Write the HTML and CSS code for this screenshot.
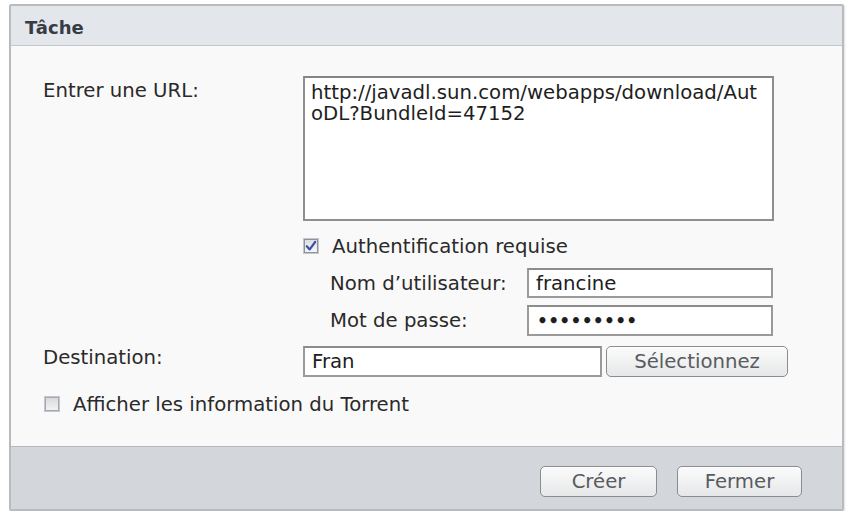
FILE: index.html
```html
<!DOCTYPE html>
<html lang="fr">
<head>
<meta charset="utf-8">
<title>Tâche</title>
<link rel="stylesheet" href="styles.css">
</head>
<body>
<div class="dialog">
  <div class="titlebar">Tâche</div>
  <div class="content">
    <div class="row-url">
      <span class="lbl lbl-url">Entrer une URL:</span>
      <textarea class="url" spellcheck="false">http://javadl.sun.com/webapps/download/AutoDL?BundleId=47152</textarea>
    </div>
    <div class="auth">
      <label class="check">
        <span class="box">
          <svg width="14" height="14" viewBox="0 0 14 14"><path d="M2.8 7.2 L5.7 10.4 L11.2 2.8" fill="none" stroke="#3a4fa0" stroke-width="2.2" stroke-linecap="round" stroke-linejoin="round"/></svg>
        </span>
        <span>Authentification requise</span>
      </label>
      <div class="cred">
        <span class="lbl2">Nom d’utilisateur:</span>
        <input class="field user" type="text" value="francine">
      </div>
      <div class="cred">
        <span class="lbl2">Mot de passe:</span>
        <input class="field pass" type="text" value="•••••••••">
      </div>
    </div>
    <div class="row-dest">
      <span class="lbl lbl-dest">Destination:</span>
      <input class="field dest" type="text" value="Fran">
      <button class="btn sel">Sélectionnez</button>
    </div>
    <label class="check torrent">
      <span class="box empty"></span>
      <span>Afficher les information du Torrent</span>
    </label>
  </div>
  <div class="footer">
    <button class="btn create">Créer</button>
    <button class="btn close">Fermer</button>
  </div>
</div>
</body>
</html>
```

FILE: styles.css
```css
html, body {
  margin: 0;
  padding: 0;
  background: #ffffff;
}

body {
  font-family: "DejaVu Sans", Verdana, sans-serif;
  font-size: 19.7px;
  color: #2a2a2a;
}

.dialog {
  margin: 4px 0 0 9px;
  width: 835px;
  height: 507px;
  box-sizing: border-box;
  border: 2px solid #b9bcbf;
  border-radius: 2px;
  display: flex;
  flex-direction: column;
  background: #f9f9f9;
  box-shadow: 1px 1px 2px rgba(0, 0, 0, 0.12);
}

.titlebar {
  height: 40px;
  box-sizing: border-box;
  border-bottom: 1px solid #c4c8cc;
  background: #e3e7eb;
  font-size: 18px;
  font-weight: bold;
  color: #363b44;
  padding: 3px 0 0 14px;
  display: flex;
  align-items: center;
}

.content {
  height: 400px;
  box-sizing: border-box;
  padding: 30px 0 0 32px;
  display: flex;
  flex-direction: column;
}

.row-url {
  display: flex;
  align-items: flex-start;
}

.lbl {
  width: 260px;
  flex: none;
  line-height: 24px;
}

.lbl-url {
  margin-top: 3px;
}

.url {
  width: 471px;
  height: 145px;
  box-sizing: border-box;
  border: 2px solid #8f8f8f;
  border-top-color: #858585;
  background: #ffffff;
  padding: 4px 4px 4px 6px;
  margin: 0;
  font-family: "DejaVu Sans", Verdana, sans-serif;
  font-size: 19.7px;
  line-height: 21px;
  color: #1e1e1e;
  resize: none;
  word-break: break-all;
  overflow: hidden;
  outline: none;
}

.auth {
  margin-left: 260px;
  display: flex;
  flex-direction: column;
}

.check {
  display: flex;
  align-items: center;
  height: 24px;
  gap: 13px;
}

.auth .check {
  margin-top: 13px;
  margin-left: 0;
}

.box {
  width: 16px;
  height: 16px;
  box-sizing: border-box;
  border: 1px solid #c3c6ca;
  box-shadow: inset 0 0 0 1px #8e939b;
  background: linear-gradient(#d9dde4, #f7f8fa);
  display: flex;
  align-items: center;
  justify-content: center;
  flex: none;
}

.box svg {
  display: block;
}

.box.empty {
  box-shadow: inset 0 0 0 1px #a5a9ae;
  background: linear-gradient(#d6d9dd, #f3f4f6);
}

.cred {
  display: flex;
  align-items: center;
  padding-left: 27px;
  margin-top: 10px;
}

.cred + .cred {
  margin-top: 7px;
}

.lbl2 {
  width: 197px;
  flex: none;
}

.field {
  box-sizing: border-box;
  border: 2px solid #9a9a9a;
  border-top-color: #8c8c8c;
  background: #ffffff;
  margin: 0;
  padding: 0 7px;
  font-family: "DejaVu Sans", Verdana, sans-serif;
  font-size: 19.7px;
  color: #1e1e1e;
  outline: none;
}

.user {
  width: 246px;
  height: 30px;
}

.pass {
  width: 246px;
  height: 31px;
  font-size: 17px;
  letter-spacing: 0.3px;
  font-weight: bold;
  padding-left: 8px;
}

.row-dest {
  display: flex;
  align-items: center;
  margin-top: 10px;
}

.lbl-dest {
  align-self: flex-start;
}

.dest {
  width: 299px;
  height: 31px;
}

.btn {
  box-sizing: border-box;
  height: 31px;
  border: 1px solid #8a8d90;
  border-radius: 5px;
  background: linear-gradient(#fbfbfb, #e6e7e8);
  font-family: "DejaVu Sans", Verdana, sans-serif;
  font-size: 19.7px;
  color: #585b60;
  padding: 0;
  margin: 0;
  box-shadow: inset 0 1px 0 #ffffff;
}

.sel {
  width: 182px;
  margin-left: 4px;
}

.torrent {
  margin-top: 15px;
  gap: 13px;
  padding-left: 1px;
}

.footer {
  flex: 1;
  border-top: 1px solid #b5b9bd;
  background: #d3d7db;
  display: flex;
  justify-content: flex-end;
  align-items: flex-start;
  gap: 20px;
  padding: 19px 40px 0 0;
}

.create {
  width: 117px;
}

.close {
  width: 125px;
}
```
